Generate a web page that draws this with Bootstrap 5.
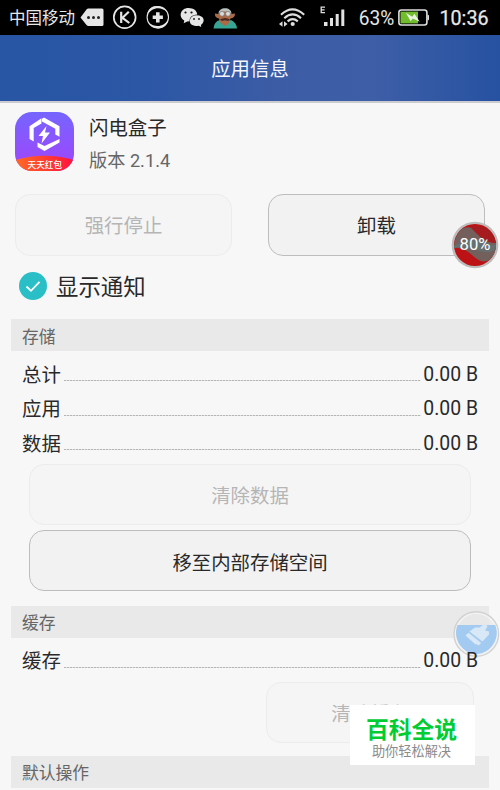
<!DOCTYPE html>
<html lang="zh-CN">
<head>
<meta charset="utf-8">
<meta name="viewport" content="width=device-width, initial-scale=1">
<title>应用信息</title>
<link rel="stylesheet" href="https://cdn.jsdelivr.net/npm/bootstrap@5.3.0/dist/css/bootstrap.min.css">
<style>
body{font-family:Roboto,"Noto Sans CJK SC",sans-serif;font-size:19.4px;line-height:1;color:#292929;background:#f7f7f7}
.screen{width:500px;height:790px}
.status{height:35px;background:#000;color:#e8e8e8;padding-left:9px}
.status svg{flex:none;display:block}
.carrier{font-size:16.5px;width:71px;padding-top:4px}
.title-bar{height:68px;padding-top:4px;background:linear-gradient(90deg,#2855a4 0,#2b57a5 28%,#3c5ca5 55%,#3e5ea7 75%,#2652a1 100%);border-bottom:2px solid #cbcbd0;color:#f4f6fb}
.app-head{height:91px;padding:9px 15px 0}
.app-copy{padding:7px 0 0 15px}
.app-name{line-height:20px}
.app-version{font-size:18.2px;line-height:20px;margin-top:12px;color:#666}
.action{height:61px;border:1px solid #bdbdbd;border-radius:15px;background:#f2f2f2;color:#292929;font-size:19.4px;line-height:1;padding:5px 0 0}
.action:disabled{border-color:#ececec;background:#f5f5f5;color:#b5b5b5;opacity:1}
.pair{padding:0 15px;gap:36px}
.pair .action{height:62px;padding-top:3px}
.notify{height:60px;margin-bottom:3px;padding:0 0 0 19px;font-size:22.4px}
.notify span{padding:3px 0 0 9px}
.section-head{height:32px;margin:0 11px;padding:4px 0 0 11px;background:#e9e9e9;color:#666;font-size:16.8px}
.rows-storage{padding-top:6px}
.data-row{height:34.7px;padding:0 22px}
.data-label{padding-top:2px}
.leader{height:1px;margin:12px 2px 0 3px;background:repeating-linear-gradient(90deg,#b5b5b5 0 2px,#e2e2e2 2px 3px)}
.stack{padding:3px 29px 14.4px;gap:5.4px}
.cache-row{margin-top:6px}
.cache-wrap{padding:3px 26px 13px}
.cache-wrap .action{width:208px}
.orb-memory{left:451px;top:221px}
.orb-clean{left:452px;top:610px}
.orb-text{font-size:16.6px;color:#fff;left:0;right:0;top:16px}
.brand{left:350px;top:705px;width:125px;height:60px;padding-right:2px;background:#fff}
.brand-name{font-size:22.8px;font-weight:700;color:#0c3;line-height:25px;margin-top:13px}
.brand-sub{font-size:13.2px;color:#8b8b8b;line-height:16px;margin-top:1px}
</style>
<script src="https://cdn.jsdelivr.net/npm/bootstrap@5.3.0/dist/js/bootstrap.bundle.min.js"></script>
</head>
<body>
<div class="screen position-relative overflow-hidden">
  <div class="status d-flex align-items-center">
    <span class="carrier text-nowrap">中国移动</span>
    <svg width="157" height="35" viewBox="80 0 157 35">
      <path d="M80.500 17.500 86.500 9.500Q87.300 8.500 88.500 8.500H102Q103.500 8.500 103.500 10V24.500Q103.500 26 102 26H88.500Q87.300 26 86.500 25Z" fill="#e6e6e6"/>
      <g fill="#222"><circle cx="88.500" cy="17.500" r="1.500"/><circle cx="93.500" cy="17.500" r="1.500"/><circle cx="98.500" cy="17.500" r="1.500"/></g>
      <circle cx="124.700" cy="17.300" r="10.900" fill="none" stroke="#e6e6e6" stroke-width="1.700"/>
      <path d="M121.200 11.800V23M128.800 11.800 122.500 17.800 129.300 23" fill="none" stroke="#e6e6e6" stroke-width="2.200"/>
      <circle cx="157.800" cy="17.300" r="10.700" fill="none" stroke="#e6e6e6" stroke-width="1.100"/>
      <path d="M147.200 15C148 4.500 161 3 167 12C160 5.500 151.500 8 147.200 15ZM148.400 22.500C156 28.500 164.500 26.500 168.500 19C167 29.500 154.500 32 148.400 22.500Z" fill="#e6e6e6"/>
      <path d="M157.800 12.200V22.400M152.700 17.300H162.900" stroke="#e6e6e6" stroke-width="3.600"/>
      <path d="M188.500 8C193.500 8 197 10.800 197.300 14.500C192.200 14.800 189.200 17.600 189.600 21.300L187.200 21.400 183.700 23.300 184.300 20.500C178 17 180.300 8 188.500 8Z" fill="#e6e6e6"/>
      <path d="M196.300 15.300C205 15.300 205.300 22.300 200.900 24.900L201.300 27 198.600 25.700C191.800 26.800 189 23.200 190 19.800C190.700 17 193.100 15.300 196.300 15.300Z" fill="#e6e6e6"/>
      <g fill="#111"><circle cx="185.500" cy="12.500" r="1.100"/><circle cx="191.500" cy="12.500" r="1.100"/><circle cx="194" cy="19" r=".9"/><circle cx="199" cy="19" r=".9"/></g>
      <path d="M213.500 28.500Q214 21.500 220 20L225 23 231 20Q236.500 22.500 237 28.500Z" fill="#36a594"/>
      <path d="M214.800 13.500 219 14C219.500 7.500 230.500 7.500 231 14L235 13.500Q235 18 230.500 18.500L228.500 24 225 26 220.500 23 219 18.500Q215 18 214.800 13.500Z" fill="#aa6a48"/>
      <path d="M218.500 14C218 6.500 232 6 231.500 14L229 11.500H221Z" fill="#b9c0be"/>
      <g fill="#d7dcdd" stroke="#777" stroke-width=".6"><circle cx="222" cy="13.800" r="2.400"/><circle cx="228" cy="13.800" r="2.400"/></g>
      <path d="M220 19.500Q225 16.500 230 19.500L228 21Q225 19.500 222 21Z" fill="#492a24"/>
    </svg>
    <svg width="192" height="35" viewBox="237 0 192 35">
      <g fill="none" stroke="#dedede" stroke-width="2.100"><path d="M281 14.700Q292.500 4.200 304.200 14.700M284.300 18.200Q292.700 10.600 301 18.200M287.600 21.400Q292.700 17 297.800 21.400"/></g>
      <circle cx="292.700" cy="24" r="2.100" fill="#dedede"/>
      <path d="M279 24 282.500 21.300V26.700ZM287.500 24 284 21.300V26.700Z" fill="#dedede"/>
      <path d="M325 7.100H321.200V12.700H325M321.200 9.800H324.600" fill="none" stroke="#dedede" stroke-width="1.300"/>
      <g fill="#e2e2e2"><rect x="324" y="22" width="3.500" height="4"/><rect x="330" y="18" width="3" height="8"/><rect x="335.700" y="14" width="3" height="12"/><rect x="341.300" y="9.500" width="3" height="16.500"/></g>
      <text x="358.700" y="25" font-size="19.400" textLength="35.500" lengthAdjust="spacingAndGlyphs" fill="#e5e5e5">63%</text>
      <rect x="398.900" y="10" width="28" height="15" rx="2.500" fill="none" stroke="#dedede" stroke-width="1.600"/>
      <rect x="400.500" y="11.600" width="17.500" height="11.800" fill="#71bd2b"/>
      <path d="M427.500 14.500Q429.500 15 429.300 17.500Q429.500 20 427.500 20.500Z" fill="#dedede"/>
      <path d="M405.800 12.700 412.300 16.700 414.400 13.700 419.700 21.700 412.800 18.500 410.700 21.200Z" fill="#e9f1e2"/>
    </svg>
    <svg width="60" height="35" viewBox="429 0 60 35"><text x="439.500" y="25" font-size="19.500" textLength="49" lengthAdjust="spacingAndGlyphs" fill="#e8e8e8" stroke="#e8e8e8" stroke-width=".25">10:36</text></svg>
  </div>
  <header class="title-bar d-flex justify-content-center align-items-center">应用信息</header>
  <div class="app-head d-flex align-items-start">
    <svg width="59" height="59" viewBox="0 0 59 59">
      <defs><linearGradient id="violet" x2="0" y2="1"><stop stop-color="#7565ff"/><stop offset="1" stop-color="#a244fb"/></linearGradient>
      <linearGradient id="ember"><stop stop-color="#ff6b24"/><stop offset="1" stop-color="#ff123e"/></linearGradient>
      <clipPath id="tile"><rect width="59" height="59" rx="17"/></clipPath></defs>
      <g clip-path="url(#tile)"><path fill="url(#violet)" d="M0 0H59V59H0Z"/><path d="M0 48Q29.500 39.500 59 48V59H0Z" fill="url(#ember)"/></g>
      <g fill="#fff"><path d="M26.500 6.300V11.500L18.700 16V29.500L14.500 27V14.200ZM29 5.500 44.500 14.300V24.800L40.300 22.500V16.700L27 9.500V6.700ZM44.500 27V30.500L29.500 39 22.500 35V30.500L29.500 34Z"/><path d="M31.500 14 23.500 24H28L26.500 31.500 35 20.500H30Z"/></g>
      <text x="12.600" y="55.500" font-family="Noto Sans CJK SC" font-weight="500" font-size="8.600" fill="#fff">天天红包</text>
    </svg>
    <div class="app-copy"><div class="app-name">闪电盒子</div><div class="app-version">版本 2.1.4</div></div>
  </div>
  <div class="pair d-flex">
    <button class="btn action flex-fill w-50" disabled>强行停止</button>
    <button class="btn action flex-fill w-50">卸载</button>
  </div>
  <div class="notify d-flex align-items-center">
    <svg width="28" height="28" viewBox="0 0 28 28"><circle cx="14" cy="14" r="14" fill="#2abfc7"/><path d="M7.500 14.500 12 18.800 20.500 9.800" fill="none" stroke="#fff" stroke-width="1.800"/></svg><span>显示通知</span>
  </div>
  <div class="section-head d-flex align-items-center">存储</div>
  <div class="rows-storage">
    <div class="data-row d-flex align-items-center"><span class="data-label">总计</span><span class="leader flex-fill"></span><span>0.00 B</span></div>
    <div class="data-row d-flex align-items-center"><span class="data-label">应用</span><span class="leader flex-fill"></span><span>0.00 B</span></div>
    <div class="data-row d-flex align-items-center"><span class="data-label">数据</span><span class="leader flex-fill"></span><span>0.00 B</span></div>
  </div>
  <div class="stack d-flex flex-column">
    <button class="btn action" disabled>清除数据</button>
    <button class="btn action">移至内部存储空间</button>
  </div>
  <div class="section-head d-flex align-items-center">缓存</div>
  <div class="data-row cache-row d-flex align-items-center position-relative z-1"><span class="data-label">缓存</span><span class="leader flex-fill"></span><span>0.00 B</span></div>
  <div class="cache-wrap d-flex justify-content-end"><button class="btn action" disabled>清除缓存</button></div>
  <div class="section-head d-flex align-items-center">默认操作</div>

  <div class="orb-memory position-absolute">
    <svg class="d-block" width="48" height="48" viewBox="0 0 48 48">
      <circle cx="24" cy="24" r="23.300" fill="#bcbcbc"/><circle cx="24" cy="24" r="21" fill="#bd1215"/>
      <path d="M3 25C5 9 13 5 19 6.500C26 8 30 17 45 20Q46 33 38 39C25 46 20 25 3 27Z" fill="#735f5c"/>
      <path d="M3 25C13 20 15 18 23 18 31 18 38 25 45 24 44 30 41 32 36 31 24 31 16 24 3 27Z" fill="#667070"/>
      <path d="M19 6C27 3 43 6 45 22C34 22 28 15 19 6Z" fill="#a51b1e"/>
    </svg>
    <span class="orb-text position-absolute text-center">80%</span>
  </div>
  <div class="orb-clean position-absolute z-0">
    <svg class="d-block" width="48" height="48" viewBox="0 0 48 48">
      <circle cx="24.300" cy="24" r="22.300" fill="#eee" fill-opacity=".6" stroke="#d2d2d2" stroke-width="1.400"/><circle cx="24.300" cy="24" r="20.500" fill="#ddd" fill-opacity=".3" stroke="#f4f4f4" stroke-width="1.200"/>
      <path d="M5.500 15H43.200C49 29 38 44 24.300 44S0 29 5.500 15Z" fill="#a3caf0"/>
      <path d="M17.500 21.500 23 17.500H27.500L31.500 14.500Q34.500 13.500 35.500 16.500L33 20.500 37 21.500V24.500L30.500 31.500Z" fill="#d8e8f7"/><path d="M16.500 22.800 29.200 33 26.500 35.500 24.500 34 23.500 34.500 13.500 25.500Z" fill="#d8e8f7"/>
    </svg>
  </div>
  <div class="brand position-absolute z-2 text-center"><div class="brand-name">百科全说</div><div class="brand-sub">助你轻松解决</div></div>
</div>
</body>
</html>
